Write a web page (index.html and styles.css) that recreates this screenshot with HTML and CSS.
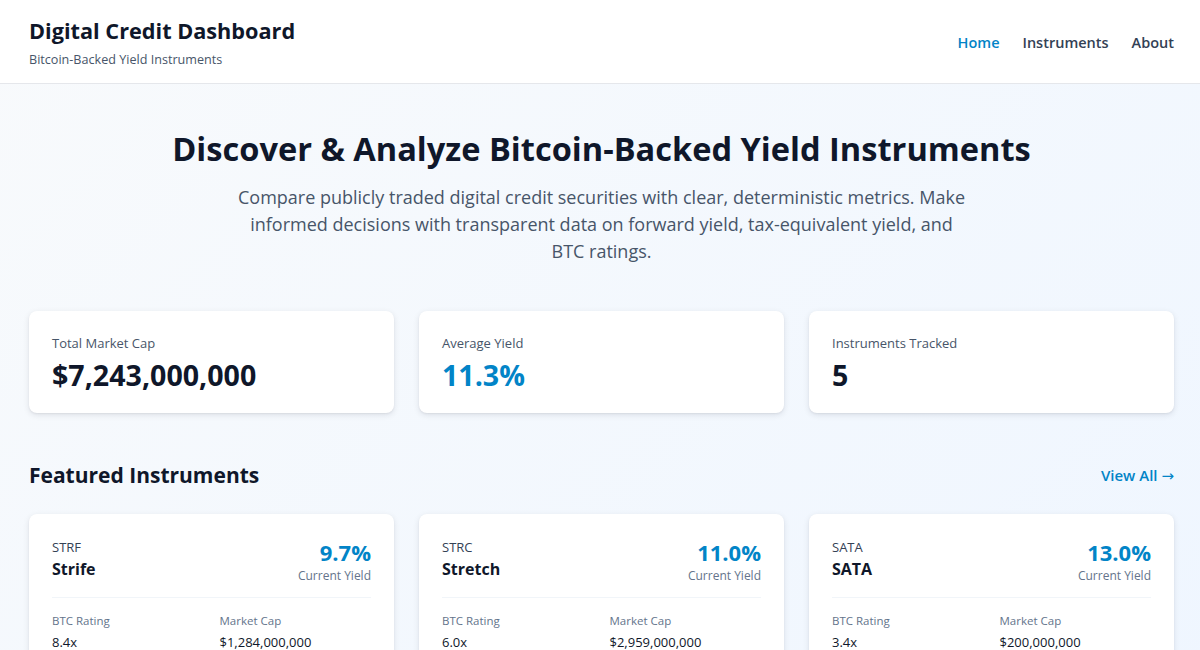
FILE: index.html
```html
<!DOCTYPE html>
<html lang="en">
<head>
<meta charset="utf-8">
<title>Digital Credit Dashboard</title>
<link rel="stylesheet" href="styles.css">
</head>
<body>
<header class="site-header">
  <div class="brand">
    <h1 class="brand-title">Digital Credit Dashboard</h1>
    <p class="brand-sub">Bitcoin-Backed Yield Instruments</p>
  </div>
  <nav class="nav">
    <a class="nav-link active" href="#">Home</a>
    <a class="nav-link" href="#">Instruments</a>
    <a class="nav-link" href="#">About</a>
  </nav>
</header>
<main class="main">
  <section class="hero">
    <h2 class="hero-title">Discover &amp; Analyze Bitcoin-Backed Yield Instruments</h2>
    <p class="hero-text">Compare publicly traded digital credit securities with clear, deterministic metrics. Make informed decisions with transparent data on forward yield, tax-equivalent yield, and BTC ratings.</p>
  </section>
  <section class="stats">
    <div class="card stat">
      <div class="stat-label">Total Market Cap</div>
      <div class="stat-value">$7,243,000,000</div>
    </div>
    <div class="card stat">
      <div class="stat-label">Average Yield</div>
      <div class="stat-value blue">11.3%</div>
    </div>
    <div class="card stat">
      <div class="stat-label">Instruments Tracked</div>
      <div class="stat-value">5</div>
    </div>
  </section>
  <section class="featured">
    <div class="section-head">
      <h3 class="section-title">Featured Instruments</h3>
      <a class="view-all" href="#">View All <span class="arrow">→</span></a>
    </div>
    <div class="grid">
      <div class="card inst">
        <div class="inst-top">
          <div>
            <div class="ticker">STRF</div>
            <div class="inst-name">Strife</div>
          </div>
          <div class="yield">
            <div class="yield-value">9.7%</div>
            <div class="yield-label">Current Yield</div>
          </div>
        </div>
        <div class="inst-metrics">
          <div><div class="m-label">BTC Rating</div><div class="m-value">8.4x</div></div>
          <div><div class="m-label">Market Cap</div><div class="m-value">$1,284,000,000</div></div>
        </div>
      </div>
      <div class="card inst">
        <div class="inst-top">
          <div>
            <div class="ticker">STRC</div>
            <div class="inst-name">Stretch</div>
          </div>
          <div class="yield">
            <div class="yield-value">11.0%</div>
            <div class="yield-label">Current Yield</div>
          </div>
        </div>
        <div class="inst-metrics">
          <div><div class="m-label">BTC Rating</div><div class="m-value">6.0x</div></div>
          <div><div class="m-label">Market Cap</div><div class="m-value">$2,959,000,000</div></div>
        </div>
      </div>
      <div class="card inst">
        <div class="inst-top">
          <div>
            <div class="ticker">SATA</div>
            <div class="inst-name">SATA</div>
          </div>
          <div class="yield">
            <div class="yield-value">13.0%</div>
            <div class="yield-label">Current Yield</div>
          </div>
        </div>
        <div class="inst-metrics">
          <div><div class="m-label">BTC Rating</div><div class="m-value">3.4x</div></div>
          <div><div class="m-label">Market Cap</div><div class="m-value">$200,000,000</div></div>
        </div>
      </div>
    </div>
  </section>
</main>
</body>
</html>
```
FILE: styles.css
```css
* { box-sizing: border-box; }
html, body { margin: 0; padding: 0; }
body {
  font-family: "Open Sans", "Noto Sans", sans-serif;
  color: #0f172a;
  background: linear-gradient(135deg, #f8fafc 0%, #eff6ff 100%);
  min-height: 650px;
  overflow: hidden;
}
.site-header {
  background: #ffffff;
  border-bottom: 1px solid #e5e7eb;
  height: 84px;
  padding: 0 26px 0 29px;
  display: flex;
  align-items: center;
  justify-content: space-between;
}
.brand { padding-top: 2px; }
.brand-title {
  margin: 0;
  font-size: 21.7px;
  font-weight: 700;
  line-height: 30px;
  color: #0f172a;
}
.brand-sub {
  margin: 5px 0 0;
  font-size: 12.6px;
  line-height: 18px;
  color: #475569;
}
.nav { display: flex; gap: 23px; padding-top: 1px; }
.nav-link {
  font-size: 14.5px;
  font-weight: 600;
  color: #334155;
  text-decoration: none;
}
.nav-link.active { color: #0284c7; }
.main { padding: 0 26px 0 29px; }
.hero { text-align: center; padding: 44px 0 46px; }
.hero-title {
  margin: 0 0 14px;
  font-size: 32.6px;
  line-height: 42px;
  font-weight: 700;
  color: #0f172a;
}
.hero-text {
  margin: 0 auto;
  max-width: 734px;
  font-size: 18px;
  line-height: 27px;
  color: #475569;
}
.stats {
  display: grid;
  grid-template-columns: repeat(3, 1fr);
  gap: 25px;
}
.card {
  background: #ffffff;
  border-radius: 8px;
  box-shadow: 0 2px 6px rgba(15, 23, 42, 0.10), 0 1px 2px rgba(15, 23, 42, 0.06);
}
.stat { padding: 23px 23px 20px; height: 102px; }
.stat-label { font-size: 13px; line-height: 18px; color: #475569; }
.stat-value { margin-top: 5px; font-size: 28.6px; line-height: 36px; font-weight: 700; color: #0f172a; }
.stat-value.blue { color: #0284c7; }
.featured { margin-top: 45px; }
.section-head {
  display: flex;
  justify-content: space-between;
  align-items: center;
  margin-bottom: 22px;
}
.section-title { margin: 0; font-size: 21px; line-height: 34px; font-weight: 700; }
.view-all { font-size: 15px; font-weight: 600; color: #0284c7; text-decoration: none; }
.arrow { font-family: "DejaVu Sans", sans-serif; font-size: 15px; font-weight: 400; }
.grid {
  display: grid;
  grid-template-columns: repeat(3, 1fr);
  gap: 25px;
}
.inst { padding: 24px 23px; height: 200px; }
.inst-top {
  display: flex;
  justify-content: space-between;
  align-items: flex-start;
  padding-bottom: 13px;
  border-bottom: 1px solid #f1f5f9;
}
.ticker { font-size: 13px; line-height: 18px; color: #334155; }
.inst-name { margin-top: 2px; font-size: 16px; line-height: 22px; font-weight: 700; color: #0f172a; }
.yield { text-align: right; }
.yield-value { font-size: 22px; line-height: 28px; font-weight: 700; color: #0284c7; }
.yield-label { margin-top: 2px; font-size: 12px; line-height: 16px; color: #64748b; }
.inst-metrics {
  display: grid;
  grid-template-columns: 1fr 1fr;
  gap: 16px;
  padding-top: 15px;
}
.m-label { font-size: 11.5px; line-height: 16px; color: #64748b; }
.m-value { margin-top: 4px; font-size: 13px; line-height: 18px; font-weight: 500; color: #0f172a; }
```
